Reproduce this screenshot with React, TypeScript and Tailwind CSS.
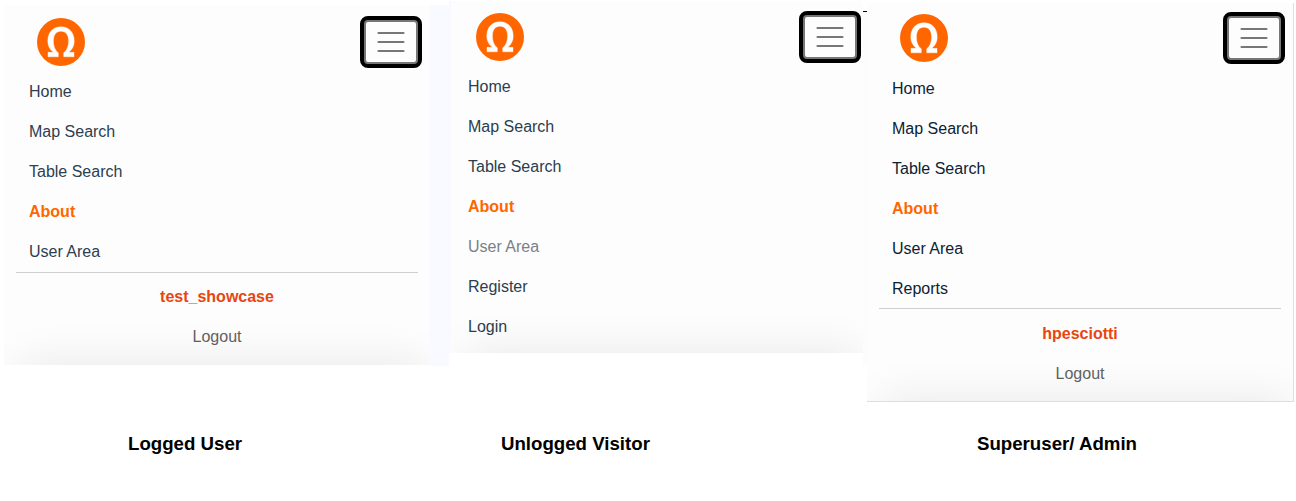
import React from "react";

type Item = { label: string; tone?: "active" | "muted" };

type PanelProps = {
  items: Item[];
  user?: string;
  frame: string;
  header: string;
  menu: string;
  text: string;
  divider?: string;
};

function Logo() {
  return (
    <svg className="mt-[2px] block size-12" viewBox="0 0 48 48" aria-label="Omega">
      <circle cx="24" cy="24" r="24" fill="#ff6600" />
      <path
        d="M11 38.8V34.3H16.5C12.5 31.5 10.8 27.5 10.8 23C10.8 14.5 16 8.8 24 8.8S37.2 14.5 37.2 23C37.2 27.5 35.5 31.5 31.5 34.3H37V38.8H26.7V34.8C30 32.5 31.6 28 31.6 23C31.6 17 29 13.2 24 13.2S16.4 17 16.4 23C16.4 28 18 32.5 21.3 34.8V38.8Z"
        fill="white"
        stroke="white"
        strokeWidth="0.4"
      />
    </svg>
  );
}

function MenuButton() {
  return (
    <button className="flex h-[52px] w-[62px] items-center justify-center rounded-[8px] border-4 border-black bg-black">
      <span className="flex h-full w-full items-center justify-center rounded-[4px] border-2 border-[#777] bg-[#fdfdfd]">
        <svg className="h-[22px] w-[28px]" viewBox="0 0 28 22" stroke="#777" strokeWidth="2.2" strokeLinecap="round">
          <path d="M1.5 2H26.5M1.5 11H26.5M1.5 20H26.5" />
        </svg>
      </span>
    </button>
  );
}

function Panel({ items, user, frame, header, menu, text, divider }: PanelProps) {
  return (
    <section className={`relative shrink-0 overflow-hidden bg-[#fdfdfd] ${frame}`}>
      <div className="absolute top-full right-1 left-4 h-20 shadow-[0_0_48px_rgba(0,0,0,0.09)]" />
      <header className={`relative flex items-start justify-between ${header}`}>
        <Logo />
        <MenuButton />
      </header>
      <nav className={`relative text-[16px] ${menu} ${text}`}>
        {items.map((item) => (
          <a
            key={item.label}
            className={`block h-10 leading-10 ${
              item.tone === "active" ? "font-bold text-[#ff6600]" : item.tone === "muted" ? "text-[#7b8086]" : ""
            }`}
          >
            {item.label}
          </a>
        ))}
      </nav>
      {user && (
        <div className={`relative ml-3 w-[402px] border-t border-[#d0d0d0] text-center text-[16px] ${divider}`}>
          <div className="h-10 leading-10 font-bold text-[#e84610]">{user}</div>
          <div className="h-10 leading-10 text-[#606060]">Logout</div>
        </div>
      )}
    </section>
  );
}

const common: Item[] = [{ label: "Home" }, { label: "Map Search" }, { label: "Table Search" }, { label: "About", tone: "active" }];

export default function App() {
  return (
    <main
      className="h-[501px] w-[1296px] overflow-hidden bg-white"
      style={{ fontFamily: '"Liberation Sans", Arial, sans-serif' }}
    >
      <div className="flex h-[432px] items-start">
        <Panel
          frame="ml-1 mt-[5px] h-[360px] w-[426px]"
          header="h-[61px] pl-[33px] pr-2 pt-[11px]"
          menu="h-[206px] pl-[25px] pt-[6px]"
          text="text-[#2c4050]"
          items={[...common, { label: "User Area" }]}
          user="test_showcase"
          divider="pt-1"
        />
        <div className="mt-[5px] h-[361px] w-[19px] shrink-0 bg-[#f8faff]" />
        <Panel
          frame="mt-px h-[352px] w-[414px] border-l-2 border-[#f8faff]"
          header="h-[60px] pl-[25px] pr-[2px] pt-[10px]"
          menu="pl-[17px] pt-[6px]"
          text="text-[#2a3e4e]"
          items={[...common, { label: "User Area", tone: "muted" }, { label: "Register" }, { label: "Login" }]}
        />
        <div className="mt-[11px] h-[355px] w-[4px] shrink-0 border-t border-black bg-[#fcfcfc]" />
        <Panel
          frame="mt-[3px] h-[399px] w-[427px] border-r border-b border-[#dedede]"
          header="h-[60px] pl-[33px] pr-2 pt-[9px]"
          menu="h-[245px] pl-[25px] pt-[6px]"
          text="text-[#0c2233]"
          items={[...common, { label: "User Area" }, { label: "Reports" }]}
          user="hpesciotti"
          divider="pt-[5px]"
        />
      </div>
      <footer className="flex text-[18.67px] leading-6 font-bold text-black">
        <h2 className="ml-32 w-[373px]">Logged User</h2>
        <h2 className="w-[476px]">Unlogged Visitor</h2>
        <h2>Superuser/ Admin</h2>
      </footer>
    </main>
  );
}
